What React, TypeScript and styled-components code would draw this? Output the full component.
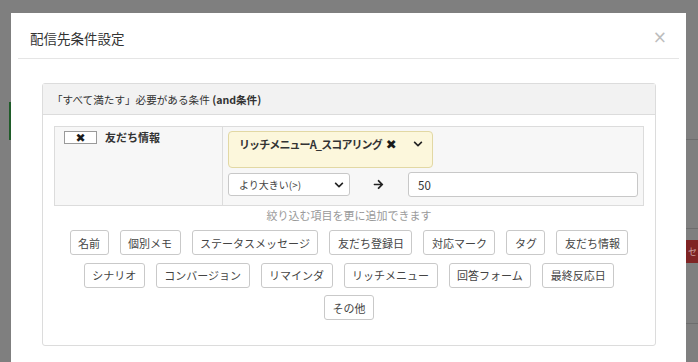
import React from "react";
import styled, { createGlobalStyle } from "styled-components";
import { FaChevronDown, FaArrowRight } from "react-icons/fa";

const GlobalStyle = createGlobalStyle`
  html, body { margin: 0; padding: 0; }
  body {
    font-family: "Noto Sans CJK JP", "Noto Sans", sans-serif;
    background: #7f7f7f;
    color: #333;
  }
  * { box-sizing: border-box; }
`;

const Stage = styled.div`
  position: relative;
  width: 698px;
  height: 362px;
  overflow: hidden;
  background: #7f7f7f;
`;

const BehindPage = styled.div`
  display: flex;
  justify-content: space-between;
  height: 100%;
`;

const LeftEdge = styled.div`
  width: 11px;
  padding-top: 102px;
`;

const GreenBar = styled.div`
  width: 2px;
  height: 38px;
  margin-left: 9px;
  background: #1f5b29;
`;

const RightEdge = styled.div`
  width: 12px;
  display: flex;
  flex-direction: column;
  padding-top: 139px;
`;

const EdgeRow = styled.div<{ $h: number }>`
  height: ${(p) => p.$h}px;
  border-top: 1px solid #6d6d6d;
  padding-top: 11px;
`;

const RedButton = styled.div`
  height: 23px;
  background: #7f2424;
  color: #c7a3a3;
  font-size: 9px;
  line-height: 23px;
  padding-left: 2px;
  white-space: nowrap;
  overflow: hidden;
`;

const Modal = styled.div`
  position: absolute;
  top: 13px;
  left: 11px;
  width: 675px;
  bottom: -30px;
  background: #fff;
  padding: 0 7px;
`;

const ModalHeader = styled.div`
  height: 46px;
  display: flex;
  align-items: center;
  justify-content: space-between;
  padding: 4px 12px 0 12px;
  border-bottom: 1px solid #e5e5e5;
`;

const Title = styled.h4`
  margin: 0;
  font-size: 13.5px;
  font-weight: 400;
  color: #333;
`;

const Close = styled.span`
  font-family: "DejaVu Sans", sans-serif;
  font-size: 17px;
  color: #bdbdbd;
  line-height: 1;
`;

const ModalBody = styled.div`
  padding: 24px 23px 24px 24px;
`;

const Panel = styled.div`
  border: 1px solid #dcdcdc;
  border-radius: 3px;
`;

const PanelHeader = styled.div`
  height: 31px;
  display: flex;
  align-items: center;
  padding: 0 9px;
  background: #f2f2f2;
  border-bottom: 1px solid #dcdcdc;
  font-size: 10.6px;
  color: #333;
  b { font-weight: 700; }
`;

const PanelBody = styled.div`
  padding: 11px 11px 25px;
`;

const CondTable = styled.div`
  display: grid;
  grid-template-columns: 168px 1fr;
  border: 1px solid #dcdcdc;
  background: #f7f7f7;
`;

const LeftCell = styled.div`
  display: flex;
  align-items: flex-start;
  gap: 8px;
  padding: 2px 9px;
  border-right: 1px solid #dcdcdc;
`;

const RemoveBtn = styled.span`
  width: 33px;
  height: 13px;
  border: 1px solid #9a9a9a;
  background: #fff;
  display: flex;
  align-items: center;
  justify-content: center;
  margin-top: 2px;
`;

const Cross = styled.span<{ $size: number }>`
  font-family: "DejaVu Sans", sans-serif;
  font-size: ${(p) => p.$size}px;
  line-height: 1;
  color: #1a1a1a;
  letter-spacing: 0;
`;

const FieldLabel = styled.span`
  font-size: 11px;
  font-weight: 700;
  line-height: 16px;
  color: #333;
`;

const RightCell = styled.div`
  display: flex;
  flex-direction: column;
  gap: 4px;
  padding: 4px 5px 8px;
`;

const TagBox = styled.div`
  width: 205px;
  height: 37px;
  background: #fcf7dc;
  border: 1px solid #e2d8a4;
  border-radius: 4px;
  padding: 4px 9px 0 10px;
  display: flex;
  justify-content: space-between;
  align-items: flex-start;
`;

const TagText = styled.span`
  font-size: 11px;
  font-weight: 700;
  line-height: 16px;
  letter-spacing: -0.9px;
  color: #333;
  display: inline-flex;
  align-items: center;
  gap: 4px;
`;

const TagChevron = styled.span`
  display: flex;
  padding-top: 3px;
  color: #222;
`;

const OpRow = styled.div`
  display: flex;
  align-items: center;
  height: 25px;
`;

const SelectBox = styled.div`
  width: 122px;
  height: 23px;
  border: 1px solid #c8c8c8;
  border-radius: 3px;
  background: #fff;
  display: flex;
  align-items: center;
  justify-content: space-between;
  padding: 0 5px 0 10px;
  font-size: 10px;
  color: #444;
`;

const ArrowWrap = styled.span`
  display: flex;
  margin: 0 24px 0 23px;
  color: #222;
`;

const ValueInput = styled.div`
  flex: 1;
  height: 25px;
  border: 1px solid #c8c8c8;
  border-radius: 3px;
  background: #fff;
  display: flex;
  align-items: center;
  padding: 0 9px;
  font-size: 11.5px;
  color: #333;
`;

const Hint = styled.div`
  text-align: center;
  font-size: 11px;
  line-height: 16px;
  color: #999;
  margin-top: 1px;
`;

const ButtonGroup = styled.div`
  display: flex;
  flex-direction: column;
  gap: 7.5px;
  margin-top: 7px;
`;

const ButtonRow = styled.div`
  display: flex;
  justify-content: center;
  gap: 11px;
`;

const AddButton = styled.span`
  height: 25px;
  display: inline-flex;
  align-items: center;
  padding: 0 7.5px;
  border: 1px solid #c9c9c9;
  border-radius: 3px;
  background: #fff;
  font-size: 11px;
  color: #444;
  white-space: nowrap;
`;

const rows = [
  ["名前", "個別メモ", "ステータスメッセージ", "友だち登録日", "対応マーク", "タグ", "友だち情報"],
  ["シナリオ", "コンバージョン", "リマインダ", "リッチメニュー", "回答フォーム", "最終反応日"],
  ["その他"],
];

export default function App() {
  return (
    <>
      <GlobalStyle />
      <Stage>
        <BehindPage>
          <LeftEdge>
            <GreenBar />
          </LeftEdge>
          <RightEdge>
            <EdgeRow $h={92} />
            <EdgeRow $h={99}>
              <RedButton>セ</RedButton>
            </EdgeRow>
            <EdgeRow $h={40} />
          </RightEdge>
        </BehindPage>
        <Modal>
          <ModalHeader>
            <Title>配信先条件設定</Title>
            <Close>×</Close>
          </ModalHeader>
          <ModalBody>
            <Panel>
              <PanelHeader>
                <span>
                  「すべて満たす」必要がある条件 <b>(and条件)</b>
                </span>
              </PanelHeader>
              <PanelBody>
                <CondTable>
                  <LeftCell>
                    <RemoveBtn>
                      <Cross $size={12}>✖</Cross>
                    </RemoveBtn>
                    <FieldLabel>友だち情報</FieldLabel>
                  </LeftCell>
                  <RightCell>
                    <TagBox>
                      <TagText>
                        リッチメニューA_スコアリング
                        <Cross $size={13}>✖</Cross>
                      </TagText>
                      <TagChevron>
                        <FaChevronDown size={10} />
                      </TagChevron>
                    </TagBox>
                    <OpRow>
                      <SelectBox>
                        <span>より大きい(&gt;)</span>
                        <FaChevronDown size={10} color="#222" />
                      </SelectBox>
                      <ArrowWrap>
                        <FaArrowRight size={11} />
                      </ArrowWrap>
                      <ValueInput>50</ValueInput>
                    </OpRow>
                  </RightCell>
                </CondTable>
                <Hint>絞り込む項目を更に追加できます</Hint>
                <ButtonGroup>
                  {rows.map((r, i) => (
                    <ButtonRow key={i}>
                      {r.map((label) => (
                        <AddButton key={label}>{label}</AddButton>
                      ))}
                    </ButtonRow>
                  ))}
                </ButtonGroup>
              </PanelBody>
            </Panel>
          </ModalBody>
        </Modal>
      </Stage>
    </>
  );
}
